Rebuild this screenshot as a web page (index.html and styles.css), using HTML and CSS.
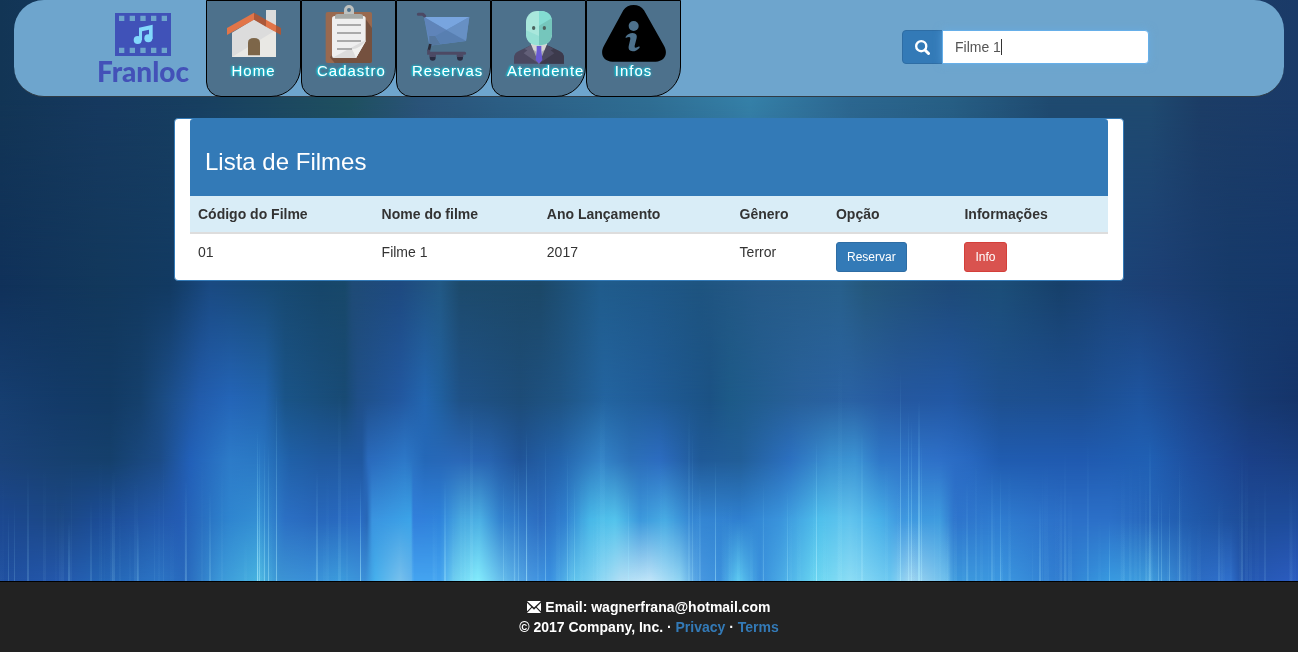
FILE: index.html
```html
<!DOCTYPE html>
<html lang="pt-BR">
<head>
<meta charset="utf-8">
<title>Franloc - Lista de Filmes</title>
<meta name="viewport" content="width=device-width, initial-scale=1">
<link rel="stylesheet" href="styles.css">
</head>
<body>
<svg class="aurora" id="aurora" viewBox="0 0 1298 652" preserveAspectRatio="none" aria-hidden="true"></svg>

<header class="navbar">
  <a class="brand" href="#">
    <svg class="brand-mark" viewBox="345 39 168 129" aria-hidden="true">
      <path fill="#4052b8" fill-rule="evenodd" d="M345 39h168v129h-168z M357 47v16h16v-16z M389 47v16h16v-16z M421 47v16h16v-16z M453 47v16h16v-16z M485 47v16h16v-16z M357 143v16h16v-16z M389 143v16h16v-16z M421 143v16h16v-16z M453 143v16h16v-16z M485 143v16h16v-16z"/>
      <g fill="#82d8fc"><circle cx="413" cy="120" r="12"/><circle cx="445" cy="115" r="12"/><path d="M417 83L458 74V116H447V89L426 94V121H417z"/></g>
    </svg>
    <span class="brand-name">Franloc</span>
  </a>

  <nav class="menu">
    <a class="menu-item" href="#">
      <svg class="menu-icon" viewBox="66 3 192 189" aria-hidden="true">
        <path fill="#dcdcdc" d="M198 30h30v64l-30-22z"/>
        <path fill="#dcdcdc" d="M96 98L162 58L228 96V171H96z"/>
        <path fill="#e9e8e4" d="M96 171L228 90V171z"/>
        <path fill="#7d6649" d="M144 166V128Q144 114 162 114T180 128V166z"/>
        <path fill="#e27548" d="M81 84L162 38V59L81 105z"/>
        <path fill="#ab5839" d="M162 38L198 59V80L162 59z"/>
        <path fill="#e27548" d="M198 59L228 76V97L198 80z"/>
        <path fill="#ab5839" d="M228 76L243 84V105L228 97z"/>
      </svg>
      <span class="menu-label">Home</span>
    </a>
    <a class="menu-item" href="#">
      <svg class="menu-icon" viewBox="351 3 192 189" aria-hidden="true">
        <rect x="377" y="36" width="139" height="153" rx="6" fill="#99694f"/>
        <path fill="#75513f" d="M492 50L516 84V183Q516 189 510 189H404L390 172z"/>
        <path fill="#efefef" d="M404 48H490Q497 48 497 56V124L468 174H404Q396 174 396 166V56Q396 48 404 48z"/>
        <path fill="#dcdcdc" d="M396 174L497 120L468 174z"/>
        <path fill="#f1f1ef" d="M468 174L497 124Q480 145 456 148Q462 158 468 174z"/>
        <path stroke="#aaa" stroke-width="6" d="M411 75H483M411 99H483M411 123H483M411 147H456"/>
        <path fill="#a7aaa7" d="M405 56V49Q405 42 414 42H480Q489 42 489 49V56z"/>
        <path fill="#bec1bf" fill-rule="evenodd" d="M432 42V30A15 15 0 0 1 462 30V42z M453 30A6 6 0 1 0 441 30A6 6 0 1 0 453 30z"/>
      </svg>
      <span class="menu-label">Cadastro</span>
    </a>
    <a class="menu-item" href="#">
      <svg class="menu-icon" viewBox="66 3 192 189" aria-hidden="true">
        <path fill="#618cc2" d="M102 51H238L228 123L118 137z"/>
        <path fill="#78a5df" d="M102 51H238L169 90z"/>
        <path fill="#5f84b9" d="M102 51L169 90L118 122z"/>
        <path fill="#6790c4" d="M238 51L169 90L228 123z"/>
        <path fill="#55779f" d="M118 108L136 108L152 133L118 137z"/>
        <path fill="#587fb1" d="M136 108L169 90L228 123L152 133z"/>
        <path fill="none" stroke="#4c4964" stroke-width="9" stroke-linecap="round" stroke-linejoin="round" d="M85 43H99L104 48"/>
        <path fill="none" stroke="#292b38" stroke-width="8" d="M121 132L116 153"/>
        <path fill="none" stroke="#4c4964" stroke-width="9" stroke-linecap="round" d="M116 153V160H224"/>
        <circle cx="128" cy="173" r="9" fill="#292b40"/><circle cx="210" cy="173" r="9" fill="#292b40"/>
        <path fill="#4c4964" d="M118 163h20v8h-20zM200 163h20v8h-20z"/>
      </svg>
      <span class="menu-label">Reservas</span>
    </a>
    <a class="menu-item" href="#">
      <svg class="menu-icon" viewBox="351 3 192 189" aria-hidden="true">
        <path fill="#4b4860" d="M372 191V174Q372 158 388 152L424 135H470L506 152Q522 158 522 174V191z"/>
        <path fill="#3c3a4c" d="M447 191L478 139L506 152Q522 158 522 174V191z"/>
        <path fill="#d5d5d4" d="M423 128H471V148L447 191L423 148z"/>
        <path fill="#a6aaaa" d="M423 148L437 153L447 191z M471 148L457 153L447 191z"/>
        <path fill="#625f78" d="M424 135L447 191L401 160L412 151L403 147z"/>
        <path fill="#4c4a61" d="M470 135L447 191L493 160L482 151L491 147z"/>
        <path fill="#695ad3" d="M440 138H454V150L457 180L447 191L437 180L440 150z"/>
        <rect x="408" y="33" width="78" height="103" rx="33" fill="#a9e7dc"/>
        <path fill="#83dcd2" d="M447 33H453Q486 35 486 66V66L447 77z"/>
        <path fill="#75c6bc" d="M447 77L486 54V103Q484 134 453 136H447z"/>
        <path fill="#96e0d5" d="M408 91L447 108V136H441Q410 134 408 103z"/>
        <ellipse cx="431" cy="84" rx="5" ry="6" fill="#4c625e"/><ellipse cx="463" cy="84" rx="5" ry="6" fill="#4c625e"/>
      </svg>
      <span class="menu-label">Atendente</span>
    </a>
    <a class="menu-item" href="#">
      <svg class="menu-icon" viewBox="66 3 192 189" aria-hidden="true">
        <path d="M130 31C143 10 179 10 192 31L252 137C266 162 253 185 227 185H97C71 185 58 162 72 137z"/>
        <circle cx="161" cy="78" r="15" fill="#4d718c"/>
        <path fill="#4d718c" d="M137 110Q145 99 158 99Q173 100 170 114L164 137Q162 147 173 141L178 139L179 143Q169 154 158 154Q143 153 146 139L151 117Q153 106 137 114z"/>
      </svg>
      <span class="menu-label">Infos</span>
    </a>
  </nav>

  <form class="search" action="#">
    <button class="search-button" type="submit" aria-label="Buscar">
      <svg class="search-icon" viewBox="0 0 14 14" aria-hidden="true"><circle cx="5.8" cy="5.8" r="4.7" fill="none" stroke="#fff" stroke-width="2.2"/><path d="M9.3 9.3L12.6 12.6" stroke="#fff" stroke-width="2.8" stroke-linecap="round"/></svg>
    </button>
    <input class="search-input" type="text" value="Filme 1" aria-label="Nome do filme">
    <span class="search-caret" aria-hidden="true"></span>
  </form>
</header>

<main class="panel">
  <div class="panel-heading"><h3 class="panel-title">Lista de Filmes</h3></div>
  <table class="movies">
    <colgroup><col class="col-code"><col class="col-name"><col class="col-year"><col class="col-genre"><col class="col-option"><col></colgroup>
    <thead>
      <tr><th>Código do Filme</th><th>Nome do filme</th><th>Ano Lançamento</th><th>Gênero</th><th>Opção</th><th>Informações</th></tr>
    </thead>
    <tbody>
      <tr><td>01</td><td>Filme 1</td><td>2017</td><td>Terror</td><td><button class="btn btn-primary" type="button">Reservar</button></td><td><button class="btn btn-danger" type="button">Info</button></td></tr>
    </tbody>
  </table>
</main>

<footer class="footer">
  <p class="footer-line"><svg class="mail-icon" viewBox="0 0 14 12" aria-hidden="true"><path fill="#fff" d="M0 0H14L7 6.6zM0 1.8L4.3 6L0 10.2zM14 1.8L9.7 6L14 10.2zM5 6.8L7 8.7L9 6.8L14 12H0z"/></svg> Email: wagnerfrana@hotmail.com</p>
  <p class="footer-line">© 2017 Company, Inc. · <a class="footer-link" href="#">Privacy</a> · <a class="footer-link" href="#">Terms</a></p>
</footer>
<script src="aurora.js"></script>
</body>
</html>
```
FILE: styles.css
```css
* { box-sizing: border-box; }

body {
  margin: 0;
  min-height: 100vh;
  display: flex;
  flex-direction: column;
  background: #12355f;
  color: #333;
  font: 14px/20px "Liberation Sans", Arial, sans-serif;
}

.aurora {
  position: fixed;
  inset: 0;
  width: 100%;
  height: 100%;
  z-index: -1;
}

.navbar {
  display: flex;
  align-items: flex-start;
  margin: 0 14px;
  padding: 0 135px 0 82px;
  background: #6ea5cd;
  border: 1px solid #303c46;
  border-width: 0 0 1px;
  border-radius: 30px;
}

.brand {
  display: flex;
  flex-direction: column;
  align-items: center;
  width: 92px;
  margin: 0 17px 0 1px;
  padding-top: 13px;
  color: #4351b8;
  text-decoration: none;
}
.brand-mark { width: 56px; height: 43px; }
.brand-name { font: 900 28px/30px Lato, sans-serif; }

.menu { display: flex; }
.menu-item {
  display: flex;
  flex-direction: column;
  width: 95px;
  height: 97px;
  padding: 0 15px;
  margin-bottom: -1px;
  background: #4d718c;
  border: 1px solid #000;
  border-radius: 0 0 30px 15px;
  color: #fff;
  text-decoration: none;
}
.menu-icon { width: 64px; height: 63px; }
.menu-label {
  font-size: 15px;
  line-height: 14px;
  letter-spacing: 1px;
  text-align: center;
  text-shadow: -1px 0 2px #00e0f0, 0 0 3px #00c8dc;
}

.search {
  position: relative;
  display: flex;
  margin: 30px 0 0 auto;
}
.search-button {
  display: flex;
  align-items: center;
  justify-content: center;
  width: 41px;
  height: 34px;
  padding: 0;
  background: #337ab7;
  border: 1px solid #2e6da4;
  border-radius: 4px 0 0 4px;
}
.search-icon { width: 15px; height: 15px; }
.search-input {
  width: 207px;
  height: 34px;
  margin-left: -1px;
  padding: 6px 12px;
  background: #fff;
  border: 1px solid #66afe9;
  border-radius: 0 4px 4px 0;
  box-shadow: 0 0 8px rgba(102, 175, 233, 0.6);
  color: #555;
  font: inherit;
  outline: 0;
}
.search-caret {
  position: absolute;
  left: 99px;
  top: 9px;
  width: 1px;
  height: 16px;
  background: #333;
}

.panel {
  width: calc(100% - 30px);
  max-width: 950px;
  margin: 21px auto 20px;
  padding: 0 15px;
  background: #fff;
  border: 1px solid #337ab7;
  border-radius: 4px;
}
.panel-heading {
  padding: 30px 15px 21px;
  background: #337ab7;
  border-radius: 3px 3px 0 0;
  color: #fff;
}
.panel-title { margin: 0; font-size: 24px; line-height: 26px; font-weight: normal; }

.movies { width: 100%; border-collapse: collapse; table-layout: fixed; }
.movies th, .movies td { padding: 8px; text-align: left; vertical-align: top; }
.movies th { background: #d9edf7; border-bottom: 2px solid #ddd; }
.col-code { width: 20%; }
.col-name { width: 18%; }
.col-year { width: 21%; }
.col-genre { width: 10.5%; }
.col-option { width: 14%; }

.btn {
  display: block;
  padding: 5px 10px;
  border: 1px solid;
  border-radius: 3px;
  color: #fff;
  font: 12px/18px "Liberation Sans", Arial, sans-serif;
}
.btn-primary { background: #337ab7; border-color: #2e6da4; }
.btn-danger { background: #d9534f; border-color: #d43f3a; }

.footer {
  margin-top: auto;
  padding: 15px;
  background: #222;
  border-top: 1px solid #000;
  color: #fff;
  font-weight: bold;
  text-align: center;
}
.footer-line { margin: 0; }
.mail-icon { width: 14px; height: 12px; vertical-align: -1px; }
.footer-link { color: #337ab7; text-decoration: none; }
```
FILE: aurora.js
```js
// Northern-lights backdrop: horizontal colour bands that fade into each other, plus thin light rays.
const bands = [
  [100, "0 123555,100 16395f,200 173f60,300 1d4a60,350 1f5060,420 2a5378,500 2c5e85,650 2f6e93,750 3580a8,850 2c6790,950 275f85,1050 1f4a70,1150 1f4a70,1200 1c3d66,1298 1a3a68"],
  [285, "0 10315a,100 12385c,170 123a62,210 1a4a82,270 184a74,320 17466a,345 18486a,352 1f4b76,400 1e4a80,440 225985,460 1d4a6c,540 1c4868,600 205c8c,650 1f5888,700 1e5480,760 265a88,840 28608c,865 25587c,950 1e4a78,1000 1c4e78,1060 17406a,1110 1b4478,1160 1c3f74,1230 163a6a,1298 15386a"],
  [400, "0 163e70,60 133a68,110 123a64,140 15406c,160 1a4a80,200 225cac,230 2465b8,265 2264ae,285 1a5488,345 184a74,358 1f4f88,400 2258a0,425 2366b0,440 2060a0,460 1f5288,520 1d4c78,560 1f5484,605 2364a0,650 205c98,710 1b5284,730 1d5a88,800 28609a,850 2a62a4,900 2558a0,950 2258a4,1000 1e5090,1080 1c4e90,1140 1e55a0,1200 1b4488,1250 173a72,1298 15346a"],
  [460, "0 1a4278,60 174070,110 15406c,160 1c4c88,190 2260b8,230 2d7bc8,260 2a78c4,290 2060a8,320 205aa0,362 2058a0,368 2a6abc,405 2d78c8,425 2568b8,460 2a68b8,490 2864b0,520 205498,560 2464ac,600 3484c8,630 2c70b8,660 2c6cc0,700 205a98,740 225e98,790 2c70c0,830 3a90d0,855 3c94d4,880 2f78c8,940 2e70c8,970 2868c0,1000 205cb0,1080 205ab0,1150 2060b4,1190 1e50a0,1250 1b4088,1298 1a3e80"],
  [520, "0 1c4890,60 1c4886,100 1c4c96,150 2258a8,180 245cb4,230 2f86d0,260 3490d4,285 2c70c4,320 2868bc,360 2a6cc4,367 2868b8,372 3a94e0,411 3ca4e8,413 3280dc,440 2f84dc,460 48a8e0,480 4cb0e4,500 3484d0,540 2c6cc0,565 3080d0,590 48b8e8,615 54c4ec,640 3c98dc,665 48ace4,690 3688d4,740 2f80d0,780 3a94dc,820 50c0ec,850 62c4ee,880 48b0e8,900 4098e0,940 3f9cdf,955 2e74cc,1000 2f7cd0,1060 2c70c8,1110 2c70c8,1160 2564b8,1200 2058a8,1250 1e4c98,1298 1e4c9c"],
  [581, "0 2050a0,60 2458ac,100 2464b4,160 2c74c4,185 2868bc,220 3c98d8,260 48b4e0,280 3c94d4,310 3a90d8,340 3c9cdc,365 3c90d8,375 46b0ec,400 78c0ec,411 64b4ec,413 44a4f0,440 44a4f0,455 70d0f0,478 84ecfc,500 68c0ec,530 4898e0,550 3a90e0,575 60c4ec,600 88d4f2,620 b0def4,650 c0e4f8,680 90d4f2,700 4898e0,720 3c90dc,738 5cc8f0,760 3a90dc,790 50b4e8,815 68d4f0,850 8cdcf4,890 6cc8f0,910 a0d4f0,945 70c0ec,955 3c98dc,1000 3c98e0,1060 307cd0,1110 389ae0,1150 3f9cdc,1200 2c6cc4,1230 3070cc,1240 2458b0,1298 2c5cc0"]
];

// x, top, width, opacity
const rays = [
  [8, 510, 1, .2], [14, 500, 1, .2], [27, 470, 2, .18], [68, 520, 2, .18], [90, 500, 2, .15], [112, 470, 3, .15],
  [137, 520, 2, .2], [185, 480, 2, .25], [209, 490, 2, .2], [257, 430, 1, .7], [259, 440, 1, .5], [264, 440, 1, .45],
  [268, 445, 1, .5], [276, 390, 1, .5], [316, 470, 2, .3], [338, 390, 3, .12], [360, 480, 1, .6], [444, 480, 2, .35],
  [470, 400, 3, .15], [503, 480, 1, .3], [514, 460, 1, .3], [518, 460, 1, .3], [526, 430, 1, .6], [545, 440, 1, .35],
  [567, 450, 1, .3], [574, 480, 1, .35], [600, 390, 5, .1], [628, 490, 1, .4], [688, 410, 2, .2], [692, 430, 1, .25],
  [699, 480, 2, .2], [715, 460, 1, .5], [763, 480, 1, .25], [787, 490, 1, .4], [816, 440, 1, .7], [838, 360, 4, .1],
  [861, 430, 2, .3], [900, 370, 1, .5], [908, 410, 1, .5], [911, 420, 1, .5], [918, 400, 2, .55], [921, 440, 1, .4],
  [966, 480, 2, .2], [991, 470, 2, .2], [1000, 470, 1, .3], [1039, 500, 2, .25], [1064, 450, 2, .12],
  [1087, 440, 2, .12], [1109, 520, 1, .3], [1149, 440, 2, .25], [1158, 490, 1, .3], [1161, 490, 1, .3],
  [1169, 500, 1, .35], [1179, 460, 1, .25], [1218, 500, 2, .15], [1241, 450, 2, .12], [1264, 480, 2, .12]
];

let seed = 7;
const random = () => (seed = (seed * 16807) % 2147483647) / 2147483647;
for (let i = 0; i < 150; i++) {
  rays.push([Math.round(random() * 1298), 450 + Math.round(random() * 90), 1 + Math.round(random() * 3), 0.02 + random() * 0.06]);
}

let defs = '<linearGradient id="ray" x2="0" y2="1"><stop offset="0" stop-color="#7fdcff" stop-opacity="0"/><stop offset="1" stop-color="#b4f0ff"/></linearGradient>';
let shapes = "";
bands.forEach(([y, list], i) => {
  const stops = list.split(",").map(item => {
    const [x, colour] = item.split(" ");
    return `<stop offset="${x / 1298}" stop-color="#${colour}"/>`;
  }).join("");
  const top = i ? bands[i - 1][0] : 0;
  defs += `<linearGradient id="band${i}">${stops}</linearGradient>`;
  if (i) {
    defs += `<linearGradient id="fade${i}" x2="0" y1="${top}" y2="${y}" gradientUnits="userSpaceOnUse"><stop offset="0" stop-color="#fff" stop-opacity="0"/><stop offset="1" stop-color="#fff"/></linearGradient>`;
    defs += `<mask id="mask${i}" maskUnits="userSpaceOnUse" x="0" y="0" width="1298" height="652"><rect width="1298" height="652" fill="url(#fade${i})"/></mask>`;
  }
  shapes += `<rect y="${top}" width="1298" height="${652 - top}" fill="url(#band${i})"${i ? ` mask="url(#mask${i})"` : ""}/>`;
});
rays.forEach(([x, y, w, o]) => {
  shapes += `<rect x="${x}" y="${y}" width="${w}" height="${590 - y}" fill="url(#ray)" opacity="${o}"/>`;
});
document.getElementById("aurora").innerHTML = `<defs>${defs}</defs>${shapes}`;
```
